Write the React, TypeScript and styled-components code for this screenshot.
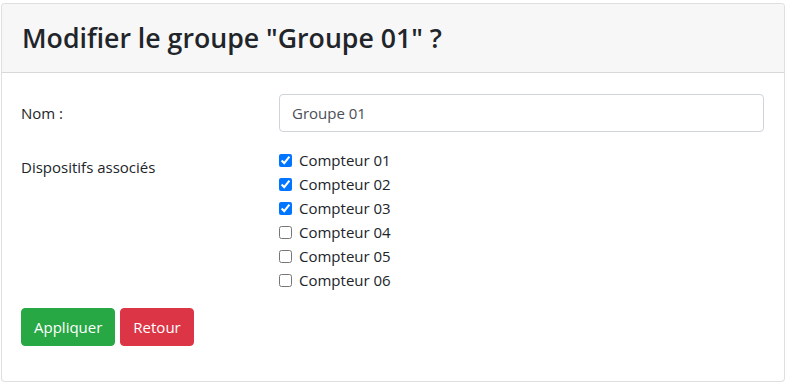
import React, { useState } from "react";
import styled, { createGlobalStyle } from "styled-components";

const GlobalStyle = createGlobalStyle`
  body {
    margin: 0;
    background: #fff;
    color: #212529;
    font-family: "Open Sans", "Noto Sans", sans-serif;
    font-size: 15px;
    line-height: 24px;
  }
  * { box-sizing: border-box; }
`;

const Page = styled.div`
  padding: 3px 0 0 1px;
`;

const Card = styled.div`
  width: 784px;
  border: 1px solid rgba(0, 0, 0, 0.125);
  border-radius: 4px;
  background: #fff;
`;

const Header = styled.div`
  height: 69px;
  padding: 0 20px;
  display: flex;
  align-items: center;
  background: #f7f7f7;
  border-bottom: 1px solid rgba(0, 0, 0, 0.125);
  border-radius: 3px 3px 0 0;
`;

const Title = styled.h3`
  margin: 0;
  font-size: 26.7px;
  font-weight: 600;
  line-height: 34px;
`;

const Body = styled.div`
  padding: 21px 20px 35px 19px;
`;

const FormRow = styled.div`
  display: grid;
  grid-template-columns: 258px 1fr;
  margin-bottom: 16px;
`;

const Label = styled.label`
  padding-top: 7px;
  line-height: 24px;
`;

const TextInput = styled.input`
  width: 100%;
  height: 38px;
  padding: 6px 12px;
  font: inherit;
  color: #495057;
  border: 1px solid #ced4da;
  border-radius: 4px;
  outline: none;
`;

const CheckList = styled.div`
  display: flex;
  flex-direction: column;
`;

const CheckItem = styled.label`
  display: flex;
  align-items: center;
  height: 24px;
  gap: 7px;
  input {
    width: 13px;
    height: 13px;
    margin: 1px 0 0 0;
  }
`;

const Actions = styled.div`
  display: flex;
  gap: 5px;
`;

const Button = styled.button<{ $variant: "success" | "danger" }>`
  height: 38px;
  padding: 6px 12px;
  font: inherit;
  color: #fff;
  border: 1px solid ${(p) => (p.$variant === "success" ? "#28a745" : "#dc3545")};
  background: ${(p) => (p.$variant === "success" ? "#28a745" : "#dc3545")};
  border-radius: 4px;
  cursor: pointer;
`;

const devices = [
  { name: "Compteur 01", checked: true },
  { name: "Compteur 02", checked: true },
  { name: "Compteur 03", checked: true },
  { name: "Compteur 04", checked: false },
  { name: "Compteur 05", checked: false },
  { name: "Compteur 06", checked: false },
];

export default function App() {
  const [name, setName] = useState("Groupe 01");
  const [checks, setChecks] = useState(devices.map((d) => d.checked));

  return (
    <Page>
      <GlobalStyle />
      <Card>
        <Header>
          <Title>Modifier le groupe "Groupe 01" ?</Title>
        </Header>
        <Body>
          <FormRow>
            <Label htmlFor="nom">Nom :</Label>
            <TextInput id="nom" value={name} onChange={(e) => setName(e.target.value)} />
          </FormRow>
          <FormRow>
            <Label>Dispositifs associés</Label>
            <CheckList>
              {devices.map((d, i) => (
                <CheckItem key={d.name}>
                  <input
                    type="checkbox"
                    checked={checks[i]}
                    onChange={() => setChecks(checks.map((c, j) => (j === i ? !c : c)))}
                  />
                  {d.name}
                </CheckItem>
              ))}
            </CheckList>
          </FormRow>
          <Actions>
            <Button $variant="success">Appliquer</Button>
            <Button $variant="danger">Retour</Button>
          </Actions>
        </Body>
      </Card>
    </Page>
  );
}
